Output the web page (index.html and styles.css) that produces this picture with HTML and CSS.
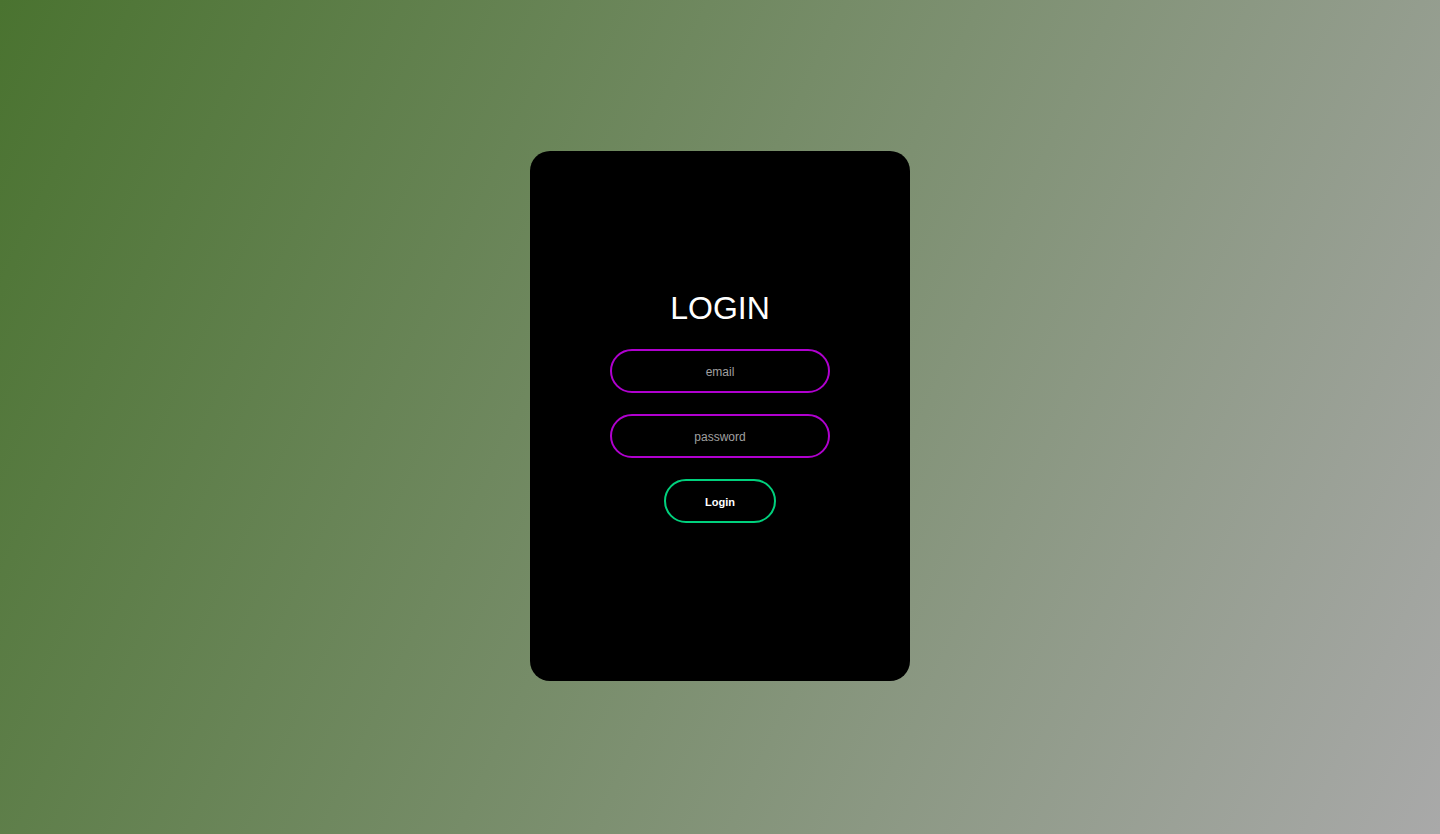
FILE: index.html
```html
<!DOCTYPE html>
<html lang="en">
<head>
<meta charset="utf-8">
<title>Login</title>
<link rel="stylesheet" href="styles.css">
</head>
<body>
<main class="page">
  <form class="card">
    <h1 class="title">LOGIN</h1>
    <input class="field" type="email" placeholder="email">
    <input class="field" type="password" placeholder="password">
    <button class="btn" type="button">Login</button>
  </form>
</main>
</body>
</html>
```
FILE: styles.css
```css
* { box-sizing: border-box; }
html, body { margin: 0; height: 100%; }
body {
  font-family: "Liberation Sans", Arial, sans-serif;
  background: linear-gradient(115deg, #4a7330 0%, #a9a9a9 100%);
  background-attachment: fixed;
}
.page {
  height: 100vh;
  display: flex;
  align-items: flex-start;
  justify-content: center;
  padding-top: 151px;
}
.card {
  width: 380px;
  height: 530px;
  background: #000;
  border-radius: 20px;
  display: flex;
  flex-direction: column;
  align-items: center;
  padding-top: 139px;
}
.title {
  margin: 0 0 22px;
  color: #fff;
  font-size: 32px;
  font-weight: 400;
  line-height: 37px;
}
.field {
  width: 220px;
  height: 44px;
  margin: 0 0 21px;
  background: transparent;
  border: 2px solid #b000cf;
  border-radius: 24px;
  color: #fff;
  text-align: center;
  font-family: "Liberation Sans", Arial, sans-serif;
  font-size: 12px;
  padding: 2px 2px 0;
  outline: none;
}
.field::placeholder { color: #a0a0a0; }
.btn {
  width: 112px;
  height: 44px;
  background: transparent;
  border: 2px solid #00d17d;
  border-radius: 24px;
  color: #fff;
  font-family: "Liberation Sans", Arial, sans-serif;
  font-size: 11px;
  font-weight: 700;
  padding: 2px 6px 0;
  cursor: pointer;
}
```
